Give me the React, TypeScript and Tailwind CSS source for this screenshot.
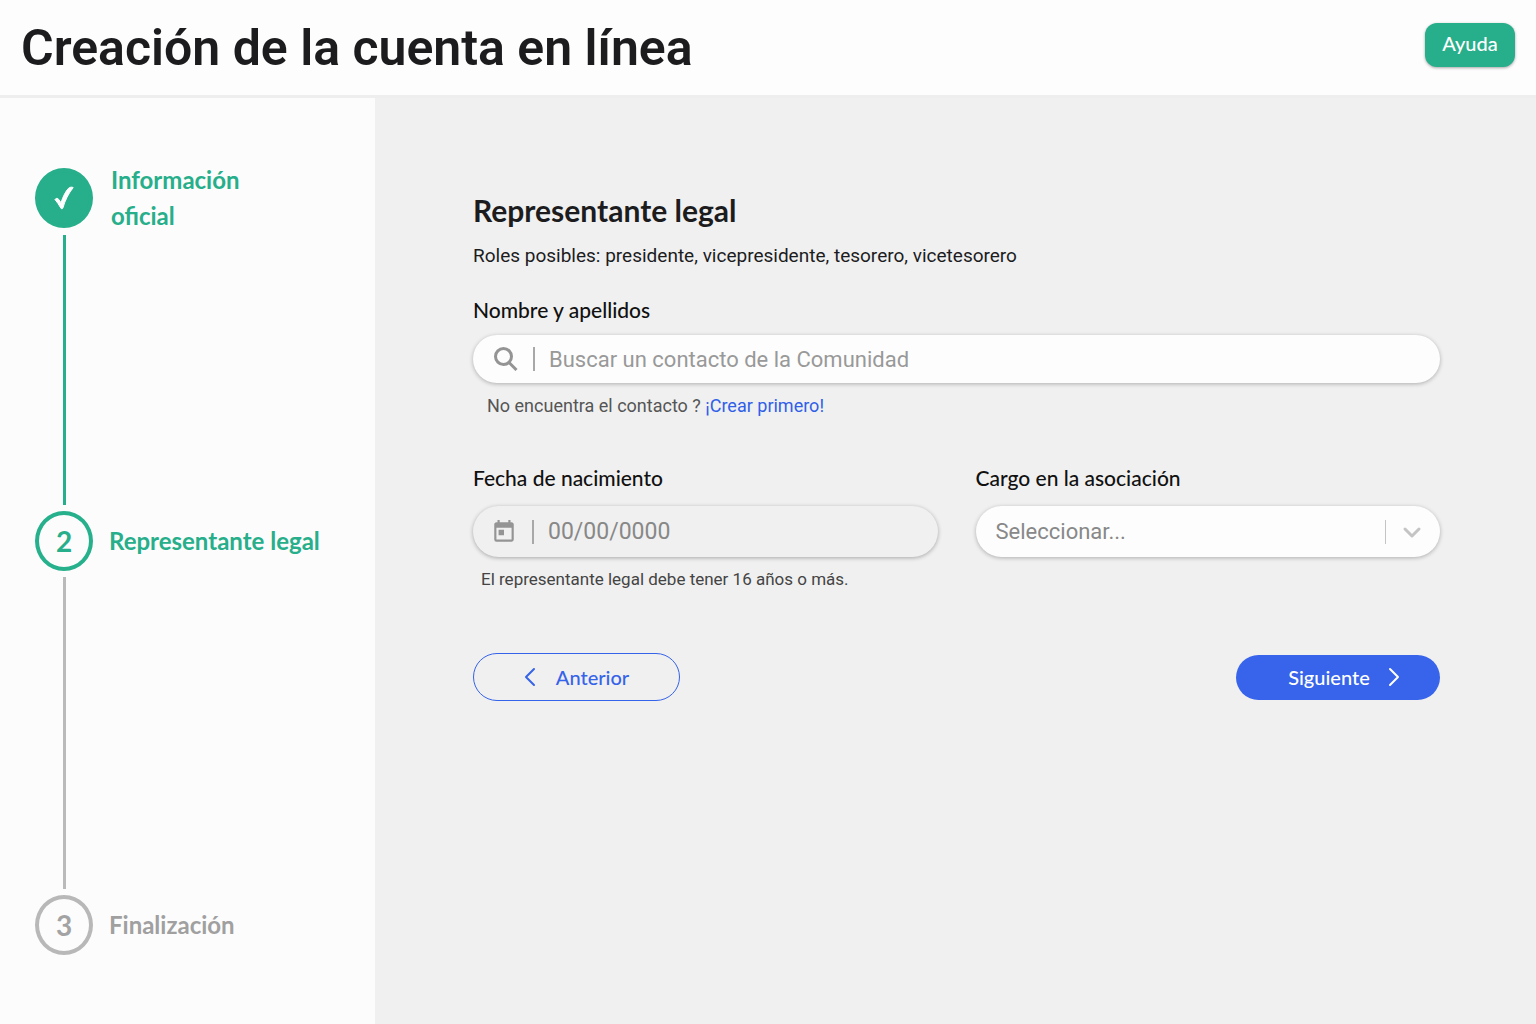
import React from 'react';
import { MdToday } from 'react-icons/md';

type StepState = 'done' | 'current' | 'todo';

interface StepProps {
  number: number;
  label: string;
  state: StepState;
}

const circleStyles: Record<StepState, string> = {
  done: 'bg-[#27ae8a] border-[#27ae8a] text-white',
  current: 'border-[#27b08c] text-[#27ae8a]',
  todo: 'border-[#b8b8b8] text-[#a3a3a3]',
};

const labelStyles: Record<StepState, string> = {
  done: 'text-[#27ae8a] pl-[18px]',
  current: 'text-[#27ae8a] pl-4',
  todo: 'text-[#a0a0a0] pl-4',
};

function Step({ number, label, state }: StepProps) {
  return (
    <div className="flex items-center">
      <div
        className={`flex h-[60px] w-[58px] shrink-0 items-center justify-center rounded-[50%] border-4 text-[28px] font-bold leading-none ${circleStyles[state]}`}
      >
        {state === 'done' ? (
          <svg viewBox="0 0 20 24" className="h-6 w-5" fill="currentColor" stroke="currentColor" strokeWidth="1" strokeLinejoin="round" aria-label="Completado">
            <path d="M1 13.500C2 12 3.600 12 4.600 13.300L7 16.700C9 10.500 11.500 5.500 14.500 2.300C15.800 1 18 .8 19.200 1.600C14.500 7.500 11.200 14 8.800 22.200C8.300 23 7.400 23 6.900 22.200C5.200 19 3.200 16.200 1 13.500z" />
          </svg>
        ) : (
          number
        )}
      </div>
      <span className={`whitespace-pre-line text-2xl font-bold leading-9 ${labelStyles[state]}`}>{label}</span>
    </div>
  );
}

function Divider() {
  return <span className="h-6 w-0.5 shrink-0 bg-[#a8a8a8]" />;
}

export default function App() {
  return (
    <div className="flex min-h-screen flex-col bg-[#f0f0f0] font-['Lato','Liberation_Sans',sans-serif] text-[#1c1c1e]">
      <header className="flex h-[98px] items-center justify-between border-b-3 border-[#eeeeee] bg-[#fdfdfd] px-[21px]">
        <h1 className="font-['Roboto','Liberation_Sans',sans-serif] text-[50px] font-semibold leading-[60px]">
          Creación de la cuenta en línea
        </h1>
        <button
          type="button"
          className="mb-1.5 h-11 w-[90px] rounded-xl bg-[#27ae8a] pb-1 text-xl font-medium text-white shadow-[0_1px_3px_rgba(0,0,0,0.35)]"
        >
          Ayuda
        </button>
      </header>

      <div className="flex flex-1">
        <aside className="w-[375px] shrink-0 bg-[#fcfcfc] pl-[35px] pt-16">
          <ol>
            <li>
              <Step number={1} label={'Información\noficial'} state="done" />
              <div className="mb-1.5 ml-7 mt-px h-[270px] w-[3px] bg-[#27ae8a]" />
            </li>
            <li>
              <Step number={2} label="Representante legal" state="current" />
              <div className="my-1.5 ml-7 h-[312px] w-[3px] bg-[#bababa]" />
            </li>
            <li>
              <Step number={3} label="Finalización" state="todo" />
            </li>
          </ol>
        </aside>

        <main className="flex-1 pl-[98px] pr-24 pt-[92px]">
          <form onSubmit={(e) => e.preventDefault()}>
            <h2 className="text-[30px] font-bold leading-10">Representante legal</h2>
            <p className="mt-3 font-['Roboto','Liberation_Sans',sans-serif] text-[19px] leading-7">
              Roles posibles: presidente, vicepresidente, tesorero, vicetesorero
            </p>

            <label htmlFor="contact" className="mt-[26px] block text-[21px] font-medium leading-7 text-[#111]">
              Nombre y apellidos
            </label>
            <div className="mt-[11px] flex h-12 items-center rounded-full bg-[#fdfdfd] pl-[21px] pr-6 shadow-[0_1px_4px_rgba(0,0,0,0.28)]">
              <svg viewBox="0 0 24 24" className="mr-[15px] size-6 shrink-0 text-[#949494]" fill="none" stroke="currentColor" strokeWidth="3">
                <circle cx="9.500" cy="9.500" r="8" />
                <path d="M15 15.500l7.500 7.500" />
              </svg>
              <Divider />
              <input
                id="contact"
                type="text"
                placeholder="Buscar un contacto de la Comunidad"
                className="ml-3.5 h-full flex-1 bg-transparent font-['Roboto','Liberation_Sans',sans-serif] text-[22px] outline-none placeholder:text-[#999]"
              />
            </div>
            <p className="mt-[11px] pl-3.5 font-['Roboto','Liberation_Sans',sans-serif] text-[18px] leading-6 text-[#555]">
              No encuentra el contacto ?{' '}
              <a href="#crear" className="text-[#2f5fe8]">
                ¡Crear primero!
              </a>
            </p>

            <div className="mt-[46px] grid grid-cols-2 gap-[38px]">
              <div>
                <label htmlFor="birth" className="block text-[21px] font-medium leading-7 text-[#111]">
                  Fecha de nacimiento
                </label>
                <div className="mt-3.5 flex h-[51px] items-center rounded-full bg-[#f0f0f0] pl-[18px] pr-6 shadow-[0_1px_4px_rgba(0,0,0,0.3)]">
                  <MdToday className="mr-[15px] size-[26px] shrink-0 text-[#949494]" />
                  <Divider />
                  <input
                    id="birth"
                    type="text"
                    placeholder="00/00/0000"
                    className="ml-3.5 h-full min-w-0 flex-1 bg-transparent font-['Roboto','Liberation_Sans',sans-serif] text-[23px] outline-none placeholder:text-[#888]"
                  />
                </div>
                <p className="mt-2.5 pl-2 font-['Roboto','Liberation_Sans',sans-serif] text-[17px] leading-6 text-[#444]">
                  El representante legal debe tener 16 años o más.
                </p>
              </div>

              <div>
                <label htmlFor="role" className="block text-[21px] font-medium leading-7 text-[#111]">
                  Cargo en la asociación
                </label>
                <div className="mt-3.5 flex h-[51px] items-center rounded-full bg-[#fdfdfd] pl-5 pr-[18px] shadow-[0_1px_4px_rgba(0,0,0,0.28)]">
                  <select
                    id="role"
                    defaultValue=""
                    className="h-full min-w-0 flex-1 appearance-none bg-transparent font-['Roboto','Liberation_Sans',sans-serif] text-[22px] text-[#888] outline-none"
                  >
                    <option value="">Seleccionar...</option>
                    <option>Presidente</option>
                    <option>Vicepresidente</option>
                    <option>Tesorero</option>
                    <option>Vicetesorero</option>
                  </select>
                  <span className="h-6 w-px shrink-0 bg-[#c4c4c4]" />
                  <svg viewBox="0 0 20 20" className="ml-4 size-5 shrink-0 text-[#c4c4c4]" fill="none" stroke="currentColor" strokeWidth="3" strokeLinecap="round" strokeLinejoin="round">
                    <path d="M3 7l7 7 7-7" />
                  </svg>
                </div>
              </div>
            </div>

            <div className="mt-[62px] flex items-center justify-between">
              <button
                type="button"
                className="flex h-12 w-[207px] items-center justify-center gap-5 rounded-full border border-[#3563e9] text-xl font-medium text-[#3563e9]"
              >
                <svg viewBox="0 0 12 20" className="h-5 w-3" fill="none" stroke="currentColor" strokeWidth="2" strokeLinecap="round" strokeLinejoin="round">
                  <path d="M10 2L2 10l8 8" />
                </svg>
                Anterior
              </button>
              <button
                type="submit"
                className="flex h-[45px] w-[204px] items-center justify-center gap-[18px] rounded-full bg-[#3764ea] pl-3 text-xl font-medium text-white"
              >
                Siguiente
                <svg viewBox="0 0 12 20" className="h-5 w-3" fill="none" stroke="currentColor" strokeWidth="2" strokeLinecap="round" strokeLinejoin="round">
                  <path d="M2 2l8 8-8 8" />
                </svg>
              </button>
            </div>
          </form>
        </main>
      </div>
    </div>
  );
}
